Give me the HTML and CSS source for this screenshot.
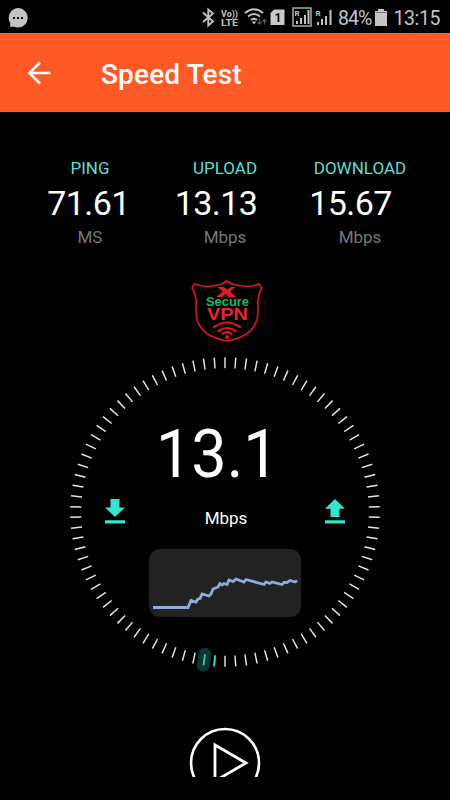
FILE: index.html
```
<!DOCTYPE html>
<html lang="en">
<head>
    <meta charset="UTF-8">
    <meta name="viewport" content="width=device-width, initial-scale=1.0">
    <title>Speed Test</title>
    <link rel="stylesheet" href="styles.css">
</head>
<body>
    <!-- Status bar -->
    <div class="status-bar">
        <svg class="chat-icon" width="22" height="22" viewBox="0 0 22 22">
            <path d="M11 1a9.8 9.8 0 1 1-4 18.8H3.200V16A9.800 9.800 0 0 1 11 1z" fill="#c4c4c4"/>
            <path d="M6 11h2M10 11h2M14 11h2" stroke="#111" stroke-width="2"/>
        </svg>
        <svg class="status-icons" width="136" height="33" viewBox="0 0 136 33">
            <!-- bluetooth -->
            <path d="M2 12.500l10 9-4.700 4V9.500l4.700 4-10 8.500" fill="none" stroke="#c2c2c2" stroke-width="1.900"/>
            <text x="20" y="16.500" class="volte" textLength="17" lengthAdjust="spacingAndGlyphs">Vo))</text>
            <text x="20" y="26" class="volte" textLength="17" lengthAdjust="spacingAndGlyphs">LTE</text>
            <!-- wifi -->
            <path d="M44 13q9-7.500 18 0M47 16.500q6-5 12 0M50 20q3-2.500 6 0" fill="none" stroke="#c2c2c2" stroke-width="2"/>
            <path d="M50.800 21.500h4.400L53 24.500z" fill="#c2c2c2"/>
            <path d="M58.500 19v5m-2-2l2 2 2-2M63.500 24.500v-5m-2 2l2-2 2 2" fill="none" stroke="#555" stroke-width="1.300"/>
            <!-- sim -->
            <path d="M73 9.500h10.500V25H69.500V13z" fill="#c8c8c8"/>
            <text x="73.500" y="22" class="sim">1</text>
            <!-- signal -->
            <rect x="92" y="8" width="18" height="18" fill="none" stroke="#c2c2c2" stroke-width="1.300"/>
            <text x="93.500" y="16" class="roam">R</text>
            <path d="M96 24v-3M100 24v-6M104 24v-9M107.500 24V10" stroke="#c2c2c2" stroke-width="2"/>
            <text x="114.500" y="16" class="roam">R</text>
            <path d="M117 25v-3M121 25v-6M125 25v-9M129.500 25V10" stroke="#c2c2c2" stroke-width="2"/>
        </svg>
        <span class="battery-level">84%</span>
        <svg class="battery" width="12" height="17" viewBox="0 0 12 17">
            <path d="M3 0h6v2h3v15H0V2h3z" fill="#c6c6c6"/>
            <path d="M1 3.500h10" stroke="#777"/>
        </svg>
        <span class="clock">13:15</span>
    </div>

    <header class="app-bar">
        <svg class="back" width="24" height="24" viewBox="0 0 24 24">
            <path d="M23.500 12H2.500M13 1.500L2.500 12 13 22.500" fill="none" stroke="#fff" stroke-width="2.500"/>
        </svg>
        <h1>Speed Test</h1>
    </header>

    <!-- Results -->
    <section class="stats">
        <div class="stat ping">
            <div class="label">PING</div>
            <div class="value">71.61</div>
            <div class="unit">MS</div>
        </div>
        <div class="stat upload">
            <div class="label">UPLOAD</div>
            <div class="value">13.13</div>
            <div class="unit">Mbps</div>
        </div>
        <div class="stat download">
            <div class="label">DOWNLOAD</div>
            <div class="value">15.67</div>
            <div class="unit">Mbps</div>
        </div>
    </section>

    <!-- Logo -->
    <svg class="logo" width="76" height="66" viewBox="0 0 76 66">
        <path d="M38 3Q31 8 22 8Q13 9 6 6L3 10Q8 17 7 29C6 48 15 59 38 63C61 59 70 48 69 29Q68 17 73 10L70 6Q63 9 54 8Q45 8 38 3z" fill="none" stroke="#df151a" stroke-width="1.600"/>
        <path d="M28 9h7l3.500 2.800L42 9h4.500l-5.500 4.500 6.500 5.500H40l-3.500-3-3.500 3h-6l7-5.500z" fill="#e31b20"/>
        <text x="17" y="27.500" class="logo-secure" textLength="43" lengthAdjust="spacingAndGlyphs">Secure</text>
        <text x="18" y="42" class="logo-vpn" textLength="41" lengthAdjust="spacingAndGlyphs">VPN</text>
        <path d="M25 49q13-9 26 0M29.500 53q8.500-6 17 0M33.500 56q4.500-3.500 9 0" fill="none" stroke="#df151a" stroke-width="2.200" stroke-linecap="round"/>
        <circle cx="38" cy="59" r="2" fill="#df151a"/>
    </svg>

    <!-- Dial -->
    <section class="dial">
        <svg class="ticks" width="312" height="312" viewBox="-156 -156 312 312">
            <circle r="149.300" pathLength="360" class="tick-ring"/>
            <rect x="-6.500" y="-12" width="13" height="24" rx="6.500" transform="translate(-20.800 147.700) rotate(8)" fill="#0b3531"/>
            <path d="M0 143.800v11" transform="rotate(8)" class="tick-active"/>
            <path d="M0 143.800v11" transform="rotate(4)" class="tick-active"/>
        </svg>
        <div class="dial-body">
            <div class="speed"><span>13.1</span></div>
            <div class="speed-row">
                <svg width="20" height="25" viewBox="0 0 20 25">
                    <path d="M5.500 0h9v8.500H20L10 18 0 8.500h5.500zM0 21.300h20V24.500H0z" fill="#35e4cf"/>
                </svg>
                <span>Mbps</span>
                <svg width="20" height="25" viewBox="0 0 20 25">
                    <path d="M5.500 18h9V9.800H20L10 0 0 9.800h5.500zM0 21.300h20V24.500H0z" fill="#35e4cf"/>
                </svg>
            </div>
            <svg class="chart" width="152" height="68" viewBox="0 0 152 68">
                <rect width="152" height="68" rx="11" fill="#222"/>
                <polyline points="4,58.500 39,58.500 42,51.500 47,53 49,50 51,49.500 53,45 60,47 62,45 64,40 69,38 71,34.500 73,36 75,34.500 78,35.500 80,31 84,32.500 87,30 95,33 97,30.500 115,35.500 117,33 121,34.500 123,33 133,35.500 135,33.500 138,33.500 141,31.500 146,33 148,31.500" fill="none" stroke="#8facd8" stroke-width="2.800"/>
            </svg>
        </div>
    </section>

    <!-- Start button, cut off by the bottom of the panel -->
    <div class="start">
        <svg width="72" height="72" viewBox="0 0 72 72">
            <circle cx="36" cy="36" r="34" fill="none" stroke="#fff" stroke-width="2.600"/>
            <path d="M26 18v36l31-18z" fill="none" stroke="#fff" stroke-width="2.800"/>
        </svg>
    </div>
</body>
</html>
```
FILE: styles.css
```
* {
    box-sizing: border-box;
}
body {
    margin: 0;
    height: 800px;
    overflow: hidden;
    background-color: #000;
    color: #fff;
    font-family: Roboto, sans-serif;
}
svg {
    display: block;
    flex-shrink: 0;
}
.status-bar {
    display: flex;
    align-items: center;
    height: 33px;
    padding: 0 10px 0 7px;
    color: #c4c4c4;
}
.chat-icon {
    margin-top: 2px;
}
.status-icons {
    margin-left: 172px;
}
.status-icons text {
    fill: #c2c2c2;
    font-weight: bold;
}
.status-icons .volte {
    font-size: 9.5px;
}
.status-icons .sim {
    font-size: 12px;
    fill: #000;
}
.status-icons .roam {
    font-size: 8px;
}
.battery-level {
    margin: 4px 0 0 1px;
    width: 34px;
    font-size: 19.5px;
    letter-spacing: -1px;
}
.battery {
    margin: 2px 0 0 4px;
}
.clock {
    margin: 4px 0 0 6px;
    font-size: 19.5px;
    letter-spacing: -0.4px;
}
.app-bar {
    display: flex;
    align-items: center;
    height: 79px;
    padding-left: 27px;
    background-color: #ff5a25;
}
.app-bar h1 {
    margin: 3px 0 0 50px;
    font-size: 28px;
    font-weight: 500;
    letter-spacing: 0.15px;
}
.stats {
    display: grid;
    grid-template-columns: repeat(3, 135px);
    justify-content: center;
    height: 166px;
    padding-top: 46px;
    text-align: center;
}
.label {
    font-size: 17px;
    line-height: 20px;
    color: #5edfd0;
}
.value {
    margin-top: 4px;
    padding-right: 3px;
    font-size: 34px;
    line-height: 42px;
    letter-spacing: -0.6px;
}
.unit {
    margin-top: 3px;
    font-size: 17px;
    line-height: 20px;
    color: #777;
}
.upload .value {
    padding-right: 18px;
}
.download .value {
    padding-right: 19px;
}
.logo {
    margin-left: 189px;
}
.logo-secure {
    fill: #14b960;
    font: bold 12.5px "Liberation Sans", sans-serif;
}
.logo-vpn {
    fill: #e3262b;
    font: bold 17px "Liberation Sans", sans-serif;
}
/* the tick ring and the readout share one grid cell */
.dial {
    display: grid;
    justify-content: center;
    margin-top: 12px;
    height: 312px;
}
.ticks,
.dial-body {
    grid-area: 1 / 1;
}
.ticks {
    overflow: visible;
}
.tick-ring {
    fill: none;
    stroke: #e6e6e6;
    stroke-width: 11;
    stroke-dasharray: 0.56 3.44;
    stroke-dashoffset: -1.72;
}
.tick-active {
    stroke: #2fd8b5;
    stroke-width: 1.7;
}
.dial-body {
    display: flex;
    flex-direction: column;
    align-items: center;
    padding-top: 60px;
}
.speed {
    padding-right: 15px;
    font-size: 67px;
    line-height: 76px;
}
.speed span {
    display: block;
    transform: scaleX(0.94);
}
.speed-row {
    display: flex;
    justify-content: space-between;
    width: 240px;
    height: 25px;
    margin-top: 7px;
}
.speed-row span {
    padding: 9px 0 0 2px;
    font-size: 17px;
    line-height: 20px;
}
.chart {
    margin-top: 25px;
}
.start {
    display: flex;
    justify-content: center;
    height: 50px;
    margin-top: 59px;
    overflow: hidden;
}
```
